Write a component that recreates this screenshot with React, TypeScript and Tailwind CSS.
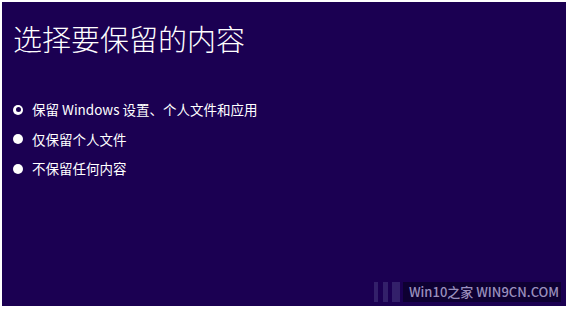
import React from "react";

export default function App() {
  const font = { fontFamily: '"Noto Sans CJK SC", "Noto Sans", sans-serif' };
  return (
    <div className="w-[569px] h-[309px] bg-white pt-[2px] pl-[2px] pr-[3px] pb-[3px]">
      <div className="relative w-full h-full bg-[#1b0052] text-white" style={font}>
        <div className="pl-[11px] pt-[16px] text-[29px] leading-[40px] font-light">
          选择要保留的内容
        </div>
        <div className="mt-[42px] pl-[11px] flex flex-col gap-[10px] text-[13.5px] leading-[19.5px]">
          <div className="flex items-center gap-[9px]">
            <span className="w-[10px] h-[10px] rounded-full bg-white flex items-center justify-center">
              <span className="w-[5px] h-[5px] rounded-full bg-[#1b0052]" />
            </span>
            <span>保留 Windows 设置、个人文件和应用</span>
          </div>
          <div className="flex items-center gap-[9px]">
            <span className="w-[10px] h-[10px] rounded-full bg-white" />
            <span>仅保留个人文件</span>
          </div>
          <div className="flex items-center gap-[9px]">
            <span className="w-[10px] h-[10px] rounded-full bg-white" />
            <span>不保留任何内容</span>
          </div>
        </div>
        <div className="absolute left-[372px] top-[280px] flex items-stretch h-[20px]">
          <span className="w-[4px] bg-[#33206a] mr-[5px]" />
          <span className="w-[5px] bg-[#33206a] mr-[4px]" />
          <span className="w-[8px] bg-[#33206a] mr-[3px]" />
          <span className="w-[158px] bg-[#0e0032] text-[#9a8fbd] text-[13px] leading-[20px] pl-[6px] font-medium">
            Win10之家 WIN9CN.COM
          </span>
        </div>
      </div>
    </div>
  );
}
